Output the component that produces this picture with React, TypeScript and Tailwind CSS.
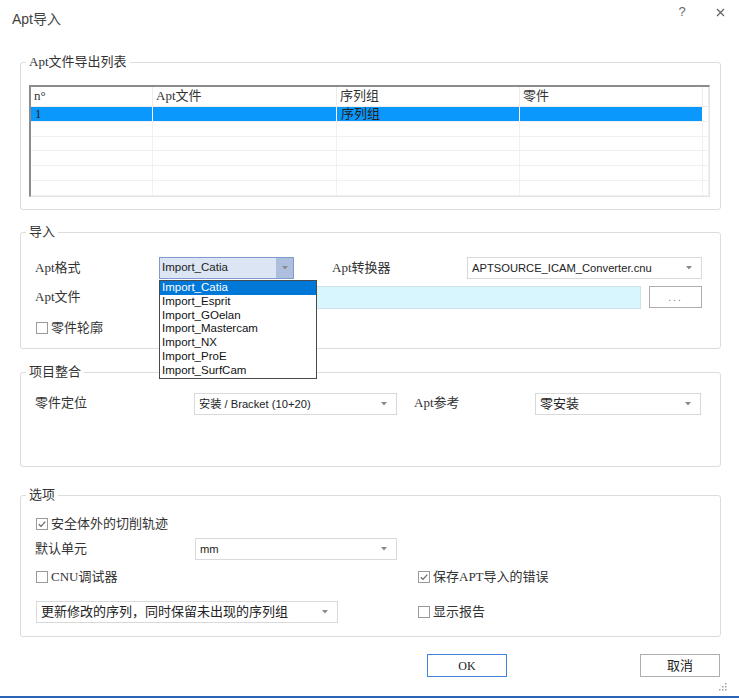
import type { ReactNode } from "react";

const SANS = "font-['Liberation_Sans','Noto_Sans_CJK_SC',sans-serif]";
const SONG = "font-['Liberation_Serif','Noto_Sans_CJK_SC',serif]";

function Arrow() {
  return (
    <svg width="6" height="4" viewBox="0 0 6 4" className="shrink-0">
      <path d="M0 0 L6 0 L3 3.5 Z" fill="#8a8a8a" />
    </svg>
  );
}

function Combo({ text, w, song }: { text: string; w: string; song?: boolean }) {
  return (
    <div className={`relative ${w} h-[22px] border border-[#d9d9d9] bg-white flex items-center pl-[4px] pr-[9px]`}>
      <span className={`flex-1 truncate text-[#222] ${song ? `${SONG} text-[13px]` : `${SANS} text-[11.2px]`}`}>{text}</span>
      <Arrow />
    </div>
  );
}

function Check({ checked, label, song }: { checked?: boolean; label: string; song?: boolean }) {
  return (
    <div className="flex items-center gap-[3px]">
      <span className="w-[12px] h-[12px] border border-[#9a9a9a] bg-white flex items-center justify-center">
        {checked && (
          <svg width="10" height="10" viewBox="0 0 10 10">
            <path d="M1.8 5.2 L4 7.4 L8.3 2.6" stroke="#6a6a6a" strokeWidth="1.3" fill="none" />
          </svg>
        )}
      </span>
      <span className={`text-[13px] text-[#333] ${song ? SONG : SANS}`}>{label}</span>
    </div>
  );
}

function Group({ title, song, h, className, children }: { title: string; song?: boolean; h: string; className: string; children: ReactNode }) {
  return (
    <fieldset className={`relative ml-[20px] w-[701px] ${h} ${className} border border-[#dcdcdc] rounded-[3px]`}>
      <legend className={`ml-[5px] px-[3px] text-[13px] leading-[16px] text-[#333] ${song ? SONG : SANS}`}>{title}</legend>
      {children}
    </fieldset>
  );
}

const formats = ["Import_Catia", "Import_Esprit", "Import_GOelan", "Import_Mastercam", "Import_NX", "Import_ProE", "Import_SurfCam"];
const cols = ["w-[122px]", "w-[184px]", "w-[183px]", "w-[183px]", "flex-1"];
const heads = ["n°", "Apt文件", "序列组", "零件", ""];

export default function App() {
  return (
    <div className={`w-[739px] h-[698px] bg-white flex flex-col text-[#333] ${SANS}`}>
      {/* title bar */}
      <div className="h-[36px] flex shrink-0">
        <div className="pl-[12px] pt-[10px] text-[14px] leading-[18px] text-[#444]">Apt导入</div>
        <div className="ml-auto flex">
          <div className="w-[38px] h-[24px] flex items-center justify-center text-[13px] text-[#666]">?</div>
          <div className="w-[38px] h-[24px] flex items-center justify-center text-[#666]">
            <svg width="9" height="9" viewBox="0 0 9 9">
              <path d="M1 1 L8 8 M8 1 L1 8" stroke="#666" strokeWidth="1.3" />
            </svg>
          </div>
        </div>
      </div>

      {/* Apt file list */}
      <Group title="Apt文件导出列表" song h="h-[156px]" className="mt-[18px] shrink-0">
        <div className="pt-[15px] pl-[8px] pr-[10px]">
          <div className={`h-[112px] border-t-2 border-l-2 border-[#8c8c8c] border-r border-b border-r-[#e3e3e3] border-b-[#e3e3e3] ${SONG} text-[13px]`}>
            <div className="h-[20px] flex border-b border-[#ececec]">
              {heads.map((t, i) => (
                <div key={i} className={`${cols[i]} border-r border-[#ececec] pl-[3px] leading-[18px] text-[#333]`}>{t}</div>
              ))}
            </div>
            {[0, 1, 2, 3, 4, 5].map((r) => (
              <div key={r} className="h-[14.8px] flex border-b border-[#f0f0f0]">
                {cols.map((c, i) => (
                  <div
                    key={i}
                    className={`${c} border-r ${r === 0 && i < 4 ? "bg-[#0a98fc] border-white" : "border-[#f0f0f0]"} pl-[4px] leading-[14px] text-[#222]`}
                  >
                    {r === 0 && i === 0 ? "1" : r === 0 && i === 2 ? "序列组" : ""}
                  </div>
                ))}
              </div>
            ))}
          </div>
        </div>
      </Group>

      {/* import */}
      <Group title="导入" h="h-[125px]" className="mt-[14px] shrink-0 z-10">
        <div className="pt-[17px] pl-[14px]">
          <div className="flex items-center h-[22px]">
            <div className={`w-[124px] text-[13px] ${SONG}`}>Apt格式</div>
            <div className="relative w-[135px] h-[22px] border border-[#7e9ccb] bg-[#dce5f3] flex items-center pl-[2px]">
              <span className="flex-1 text-[11.5px] text-[#222]">Import_Catia</span>
              <div className="w-[17px] h-full bg-[#adbfdc] flex items-center justify-center">
                <Arrow />
              </div>
              <div className="absolute left-[-1px] top-[22px] w-[158px] border border-[#4a4a4a] bg-white z-20">
                {formats.map((f, i) => (
                  <div
                    key={f}
                    className={`h-[13.8px] leading-[13.8px] pl-[2px] text-[11.5px] ${i === 0 ? "bg-[#0078d7] text-white" : "text-[#111]"}`}
                  >
                    {f}
                  </div>
                ))}
              </div>
            </div>
            <div className={`ml-[38px] w-[135px] text-[13px] ${SONG}`}>Apt转换器</div>
            <Combo text="APTSOURCE_ICAM_Converter.cnu" w="w-[235px]" />
          </div>
          <div className="flex items-center h-[24px] mt-[6px]">
            <div className={`w-[124px] text-[13px] ${SONG}`}>Apt文件</div>
            <div className="w-[482px] h-[23px] border border-[#cde3ea] bg-[#d8f6fd]" />
            <div className="ml-[8px] w-[53px] h-[22px] border border-[#adadad] bg-white flex items-center justify-center text-[10px] tracking-[2px] text-[#777]">
              ...
            </div>
          </div>
          <div className="flex items-center h-[20px] mt-[9px] pl-[1px]">
            <Check label="零件轮廓" />
          </div>
        </div>
      </Group>

      {/* project */}
      <Group title="项目整合" h="h-[103px]" className="mt-[15px] shrink-0">
        <div className="mt-[13px] pl-[14px] flex items-center h-[22px]">
          <div className="w-[159px] text-[13px] -mt-[3px]">零件定位</div>
          <Combo text="安装 / Bracket (10+20)" w="w-[203px]" />
          <div className={`ml-[17px] w-[121px] text-[13px] -mt-[3px] ${SONG}`}>Apt参考</div>
          <Combo text="零安装" w="w-[166px]" song />
        </div>
      </Group>

      {/* options */}
      <Group title="选项" h="h-[150px]" className="mt-[20px] shrink-0">
        <div className="pt-[11px] pl-[15px]">
          <div className="h-[20px] flex items-center">
            <Check checked label="安全体外的切削轨迹" />
          </div>
          <div className="h-[22px] mt-[4px] flex items-center -ml-[1px]">
            <div className="w-[160px] text-[13px]">默认单元</div>
            <Combo text="mm" w="w-[202px]" />
          </div>
          <div className="h-[20px] mt-[7px] flex items-center">
            <div className="w-[382px]">
              <Check label="CNU调试器" song />
            </div>
            <Check checked label="保存APT导入的错误" song />
          </div>
          <div className="h-[22px] mt-[14px] flex items-center">
            <div className="w-[382px]">
              <Combo text="更新修改的序列，同时保留未出现的序列组" w="w-[302px]" song />
            </div>
            <Check label="显示报告" />
          </div>
        </div>
      </Group>

      {/* buttons */}
      <div className="mt-[17px] h-[23px] flex pl-[427px] gap-[133px] shrink-0">
        <div className={`w-[80px] h-[23px] border border-[#3f84da] bg-white flex items-center justify-center text-[12px] text-[#222] ${SONG}`}>OK</div>
        <div className="w-[80px] h-[23px] border border-[#adadad] bg-white flex items-center justify-center text-[13px] text-[#222]">取消</div>
      </div>

      <div className="mt-[6px] flex justify-end pr-[12px] shrink-0">
        <svg width="8" height="8" viewBox="0 0 8 8">
          <rect x="6" y="0" width="1.5" height="1.5" fill="#a0a0a0" />
          <rect x="3" y="3" width="1.5" height="1.5" fill="#a0a0a0" />
          <rect x="6" y="3" width="1.5" height="1.5" fill="#a0a0a0" />
          <rect x="0" y="6" width="1.5" height="1.5" fill="#a0a0a0" />
          <rect x="3" y="6" width="1.5" height="1.5" fill="#a0a0a0" />
          <rect x="6" y="6" width="1.5" height="1.5" fill="#a0a0a0" />
        </svg>
      </div>

      <div className="mt-auto h-[2px] bg-[#2a64b6] shrink-0" />
    </div>
  );
}
